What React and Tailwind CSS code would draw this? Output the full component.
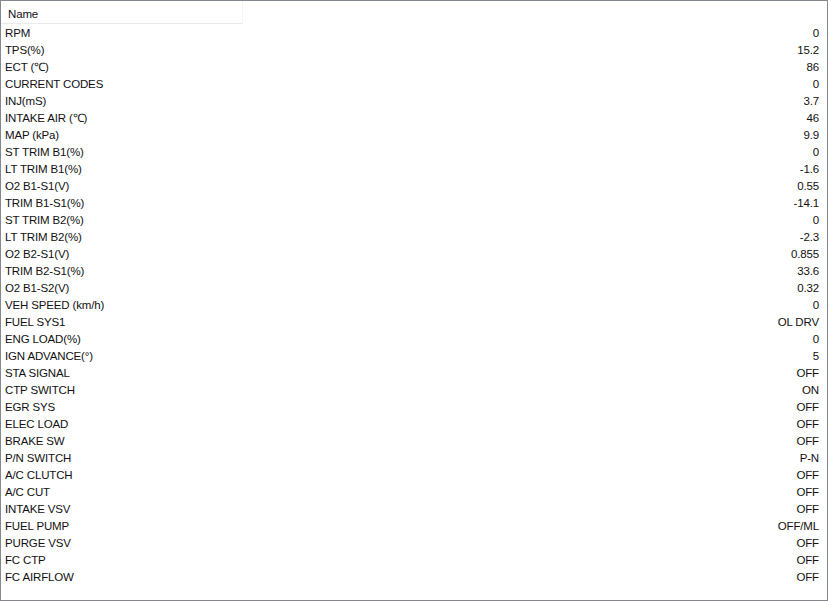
import React from "react";

const rows = [
    ["RPM", "0"],
    ["TPS(%)", "15.2"],
    ["ECT (℃)", "86"],
    ["CURRENT CODES", "0"],
    ["INJ(mS)", "3.7"],
    ["INTAKE AIR (℃)", "46"],
    ["MAP (kPa)", "9.9"],
    ["ST TRIM B1(%)", "0"],
    ["LT TRIM B1(%)", "-1.6"],
    ["O2 B1-S1(V)", "0.55"],
    ["TRIM B1-S1(%)", "-14.1"],
    ["ST TRIM B2(%)", "0"],
    ["LT TRIM B2(%)", "-2.3"],
    ["O2 B2-S1(V)", "0.855"],
    ["TRIM B2-S1(%)", "33.6"],
    ["O2 B1-S2(V)", "0.32"],
    ["VEH SPEED (km/h)", "0"],
    ["FUEL SYS1", "OL DRV"],
    ["ENG LOAD(%)", "0"],
    ["IGN ADVANCE(°)", "5"],
    ["STA SIGNAL", "OFF"],
    ["CTP SWITCH", "ON"],
    ["EGR SYS", "OFF"],
    ["ELEC LOAD", "OFF"],
    ["BRAKE SW", "OFF"],
    ["P/N SWITCH", "P-N"],
    ["A/C CLUTCH", "OFF"],
    ["A/C CUT", "OFF"],
    ["INTAKE VSV", "OFF"],
    ["FUEL PUMP", "OFF/ML"],
    ["PURGE VSV", "OFF"],
    ["FC CTP", "OFF"],
    ["FC AIRFLOW", "OFF"],
];

export default function App() {
    return (
        <div
            className="w-[828px] h-[601px] bg-white border border-[#828790] overflow-hidden text-[11.5px] tracking-[-0.15px] text-[#111]"
            style={{ fontFamily: '"Liberation Sans", Arial, sans-serif' }}
        >
            {/* Header */}
            <div className="w-[242px] h-[23px] border-b border-[#eaeaea] border-r border-r-[#f4f4f4] flex items-center pl-[7px] pt-[6px]">
                Name
            </div>

            {/* Rows */}
            <div className="flex flex-col pt-[1px]">
                {rows.map(([name, value]) => (
                    <div
                        key={name}
                        className="h-[17px] flex items-center justify-between pl-[4px] pr-[8px] leading-none"
                    >
                        <span>{name}</span>
                        <span>{value}</span>
                    </div>
                ))}
            </div>
        </div>
    );
}
